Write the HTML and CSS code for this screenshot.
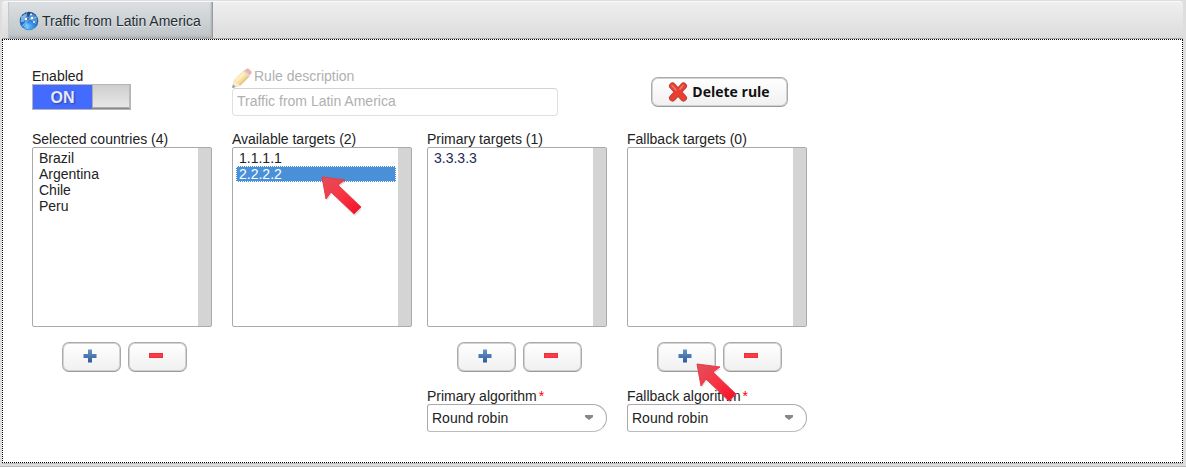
FILE: index.html
```
<!DOCTYPE html>
<html lang="en">

<head>
    <meta charset="UTF-8">
    <title>Traffic from Latin America</title>
    <link rel="stylesheet" href="styles.css">
</head>

<body>

<!-- Shared icons -->
<svg class="sprite" aria-hidden="true">
    <defs>
        <linearGradient id="plus-fill" x1="0" y1="0" x2="0" y2="1">
            <stop offset="0" stop-color="#6a95c8"/>
            <stop offset="1" stop-color="#2d5c9c"/>
        </linearGradient>
        <linearGradient id="arrow-fill" x1="0" y1="0" x2="1" y2="1">
            <stop offset="0" stop-color="#e0505c"/>
            <stop offset="0.5" stop-color="#f83444"/>
            <stop offset="1" stop-color="#f40f25"/>
        </linearGradient>
    </defs>
    <symbol id="icon-plus" viewBox="0 0 16 16">
        <path d="M6 1.500h4v4.500h4.500v4h-4.500v4.500h-4v-4.500h-4.500v-4h4.500z" fill="url(#plus-fill)"/>
    </symbol>
    <symbol id="icon-minus" viewBox="0 0 16 16">
        <rect x="1.5" y="5.5" width="13" height="4" fill="#fb3b46" stroke="#f02f3a"/>
    </symbol>
    <symbol id="icon-arrow" viewBox="0 0 44 42">
        <path d="M2 3L25 6 18 11 41 33 34 40 11 18 6 25z" fill="#000" opacity="0.12"/>
        <path d="M1 1L24 4 17 9 40 31 33 38 10 16 5 23z" fill="url(#arrow-fill)" stroke="#e83a48" stroke-width="1" stroke-linejoin="round"/>
    </symbol>
</svg>

<div class="frame">
    <nav class="tab-bar">
        <button class="tab" type="button">
            <svg class="icon-globe" viewBox="0 0 20 20" aria-hidden="true">
                <defs>
                    <radialGradient id="globe-fill" cx="0.5" cy="0.8" r="0.8">
                        <stop offset="0" stop-color="#5ab8fa"/>
                        <stop offset="0.5" stop-color="#2474c8"/>
                        <stop offset="1" stop-color="#173e7c"/>
                    </radialGradient>
                </defs>
                <circle cx="10" cy="10" r="9.3" fill="url(#globe-fill)"/>
                <path d="M2 6L6 2.500 8 4 6 6 7 8 4 11 1.500 11z" fill="#8cc4ef" opacity="0.8"/>
                <path d="M12 2L16 4 18.500 8 17.500 12 14 9 11 8 10 5z" fill="#8fc2ec" opacity="0.5"/>
                <path d="M4 14L8 12 11 14 9 18 6 17.500z" fill="#72c3ff" opacity="0.7"/>
                <path d="M2 6Q10 4 17 13M8 1Q5 10 9 18M18 6Q10 7 3 15" fill="none" stroke="#b9dcfa" stroke-width="0.5"/>
                <g fill="#fff"><circle cx="7" cy="8" r="1.200"/><circle cx="13" cy="7" r="1.200"/><circle cx="12" cy="3.500" r="0.900"/><circle cx="15" cy="11" r="0.900"/></g>
            </svg>
            <span>Traffic from Latin America</span>
        </button>
    </nav>

    <form class="panel">
        <!-- Rule header -->
        <div class="rule-row">
            <div class="field">
                <label for="enabled">Enabled</label>
                <div class="toggle">
                    <input type="checkbox" id="enabled" checked>
                    <span class="toggle-on">ON</span>
                    <span class="toggle-knob"></span>
                </div>
            </div>
            <div class="field description">
                <label for="description">
                    <svg class="icon-pencil" viewBox="0 0 20 20" aria-hidden="true">
                        <path d="M0 20L2 12 12 2 18 8 8 18z" fill="#f5b92e"/>
                        <path d="M4 13L14 3.500" stroke="#ffdf70" stroke-width="3"/>
                        <path d="M7.500 17L17 7.500" stroke="#c98310" stroke-width="2"/>
                        <path d="M12 3L14.500 0.700Q16 0 18 2 20.500 4 19.300 5.500L17 8z" fill="#e0523f"/>
                        <path d="M11 3.500L12.500 2 18 7.500 16.500 9z" fill="#b0b0b0"/>
                        <path d="M0 20L2 12 8 18z" fill="#ecd0a4"/>
                        <path d="M0 20L1 16.500 3.800 19z" fill="#222"/>
                    </svg>
                    <span>Rule description</span>
                </label>
                <input type="text" id="description" value="Traffic from Latin America" disabled>
            </div>
            <button class="btn btn-delete" type="button">
                <svg class="icon-cross" viewBox="0 0 20 20" aria-hidden="true">
                    <path d="M4.500 4L15.500 16M15.500 4L4.500 16" stroke="#a8443f" stroke-width="7" stroke-linecap="round"/>
                    <path d="M4.500 4L15.500 16M15.500 4L4.500 16" stroke="#ec3d31" stroke-width="5.500" stroke-linecap="round"/>
                    <path d="M4 3.500L8 8M15 3.500L12 7" stroke="#f5766b" stroke-width="1.500" stroke-linecap="round"/>
                </svg>
                Delete rule
            </button>
        </div>

        <!-- Lists -->
        <div class="lists">
            <div class="list-column">
                <label for="countries">Selected countries (4)</label>
                <select id="countries" class="list" multiple>
                    <option>Brazil</option>
                    <option>Argentina</option>
                    <option>Chile</option>
                    <option>Peru</option>
                </select>
                <div class="list-buttons">
                    <button class="btn" type="button" aria-label="Add country"><svg class="icon"><use href="#icon-plus"/></svg></button>
                    <button class="btn" type="button" aria-label="Remove country"><svg class="icon"><use href="#icon-minus"/></svg></button>
                </div>
            </div>

            <div class="list-column available">
                <label for="available">Available targets (2)</label>
                <select id="available" class="list" multiple>
                    <option>1.1.1.1</option>
                    <option selected>2.2.2.2</option>
                </select>
                <svg class="pointer pointer-target" aria-hidden="true"><use href="#icon-arrow"/></svg>
            </div>

            <div class="list-column">
                <label for="primary">Primary targets (1)</label>
                <select id="primary" class="list" multiple>
                    <option class="linked">3.3.3.3</option>
                </select>
                <div class="list-buttons">
                    <button class="btn" type="button" aria-label="Add primary target"><svg class="icon"><use href="#icon-plus"/></svg></button>
                    <button class="btn" type="button" aria-label="Remove primary target"><svg class="icon"><use href="#icon-minus"/></svg></button>
                </div>
                <label for="primary-algorithm">Primary algorithm<span class="required">*</span></label>
                <select id="primary-algorithm" class="combo">
                    <option>Round robin</option>
                </select>
            </div>

            <div class="list-column">
                <label for="fallback">Fallback targets (0)</label>
                <select id="fallback" class="list" multiple></select>
                <div class="list-buttons">
                    <button class="btn" type="button" aria-label="Add fallback target"><svg class="icon"><use href="#icon-plus"/></svg></button>
                    <button class="btn" type="button" aria-label="Remove fallback target"><svg class="icon"><use href="#icon-minus"/></svg></button>
                    <svg class="pointer pointer-add" aria-hidden="true"><use href="#icon-arrow"/></svg>
                </div>
                <label for="fallback-algorithm">Fallback algorithm<span class="required">*</span></label>
                <select id="fallback-algorithm" class="combo">
                    <option>Round robin</option>
                </select>
            </div>
        </div>
    </form>
</div>

</body>

</html>
```
FILE: styles.css
```
* {
    box-sizing: border-box;
}

body {
    margin: 0;
    background-color: #dedede;
    color: #222;
    font-family: "Liberation Sans", Arial, sans-serif;
    font-size: 14px;
    line-height: 16px;
}

button,
input,
select {
    font: inherit;
    color: inherit;
    margin: 0;
}

.sprite {
    position: absolute;
    width: 0;
    height: 0;
}

.frame {
    display: flex;
    flex-direction: column;
    min-height: 100vh;
    padding: 1px 3px 3px 2px;
    border-bottom: 1px solid #bbb;
}

/* Tabs */
.tab-bar {
    display: flex;
    height: 38px;
    padding-left: 6px;
    border-top: 1px solid #fafafa;
    border-bottom: 1px solid #a5a5a5;
    border-radius: 4px 4px 0 0;
    background: linear-gradient(#efefef, #dcdcdc);
}

.tab {
    display: flex;
    align-items: center;
    gap: 3px;
    padding: 1px 11px 0 10px;
    border: 0;
    border-left: 1px solid #c4c8ca;
    border-right: 1px solid #999c9e;
    background: linear-gradient(#dce0e3, #bec4c7);
    box-shadow: inset 0 -3px 3px -2px #a4a9ac, inset -2px 0 2px -1px #a9aeb1;
    color: #222c33;
    text-shadow: 0 1px 0 #eef1f3;
    white-space: nowrap;
}

.icon-globe {
    width: 20px;
    height: 20px;
}

/* Rule panel */
.panel {
    flex: 1;
    padding: 28px 29px;
    border: 1px dotted #000;
    background-color: #fff;
    box-shadow: 0 1px 0 #bcbcbc;
}

.rule-row,
.lists {
    display: grid;
    grid-template-columns: 200px 195px 200px 180px;
    align-items: start;
}

.rule-row {
    margin-bottom: 15px;
}

.field,
.list-column {
    display: flex;
    flex-direction: column;
    align-items: flex-start;
}

.toggle {
    position: relative;
    display: flex;
    width: 99px;
    height: 26px;
    border: 1px solid #b5b5b5;
}

.toggle input {
    position: absolute;
    inset: 0;
    width: 100%;
    height: 100%;
    opacity: 0;
}

.toggle-on {
    width: 59px;
    background-color: #446bff;
    color: #e6e8fb;
    font-size: 16px;
    font-weight: bold;
    line-height: 25px;
    text-align: center;
    text-shadow: 1px 1px 2px #2a3fa8;
}

.toggle-knob {
    flex: 1;
    border-right: 1px solid #bbb;
    border-bottom: 1px solid #888;
    background: linear-gradient(#cecece, #e8e8e8);
    box-shadow: inset 0 -1px 0 #aaa, inset 1px 0 0 #aaa;
}

.description {
    grid-column: 2 / 4;
}

.description label {
    display: flex;
    gap: 2px;
    height: 20px;
    color: #b0b0b0;
}

.description input {
    width: 326px;
    height: 28px;
    padding: 0 4px 2px;
    border: 1px solid #e0e0e0;
    border-top-color: #d2d2d2;
    border-radius: 4px;
    background-color: #fff;
    color: #b0b0b0;
}

.icon-pencil {
    width: 20px;
    height: 20px;
    opacity: 0.45;
}

/* Buttons */
.btn {
    display: flex;
    align-items: center;
    justify-content: center;
    width: 59px;
    height: 30px;
    padding: 0 4px 2px 0;
    border: 1px solid #aaa;
    border-bottom-color: #999;
    border-radius: 7px;
    background: linear-gradient(#fff, #f0f0f0);
    box-shadow: inset 0 0 0 1px #d2d2d2;
}

.btn-delete {
    gap: 4px;
    width: 137px;
    margin: 9px 0 0 24px;
    padding: 0 1px 0 0;
    color: #111;
    font-family: "Open Sans", sans-serif;
    font-weight: bold;
}

.icon-cross {
    width: 20px;
    height: 20px;
}

.icon {
    width: 16px;
    height: 16px;
}

/* Lists */
.list {
    width: 180px;
    height: 180px;
    padding: 2px 15px 2px 3px;
    border: 1px solid #aaa;
    border-radius: 2px;
    outline: 0;
    overflow: hidden;
    background: linear-gradient(#d4d4d4, #d4d4d4) right / 13px 100% no-repeat #fff;
}

.list option {
    height: 16px;
    min-height: 16px;
    padding: 0 3px;
    line-height: 16px;
}

.list option:checked {
    outline: 1px dotted #fff;
    outline-offset: -1px;
    background: linear-gradient(#4a90d9, #4a90d9);
    color: #fff;
}

.list .linked {
    color: #1e2a55;
}

.list-buttons {
    position: relative;
    display: flex;
    gap: 7px;
    margin: 15px 0 16px 30px;
}

.required {
    padding-left: 2px;
    color: #f00;
}

.combo {
    width: 180px;
    height: 28px;
    padding: 0 4px;
    border: 1px solid #aaa;
    border-bottom-color: #bbb;
    border-radius: 3px 14px 14px 3px;
    appearance: none;
    background: url("data:image/svg+xml,%3Csvg xmlns='http://www.w3.org/2000/svg' width='10' height='6'%3E%3Cpath d='M1 0h8v2L5 5 1 2z' fill='%23888'/%3E%3C/svg%3E") right 12px center no-repeat #fff;
}

/* Arrows over the lists */
.available {
    position: relative;
}

.pointer {
    position: absolute;
    width: 44px;
    height: 42px;
    pointer-events: none;
}

.pointer-target {
    top: 45px;
    left: 89px;
}

.pointer-add {
    top: 21px;
    left: 39px;
}
```
